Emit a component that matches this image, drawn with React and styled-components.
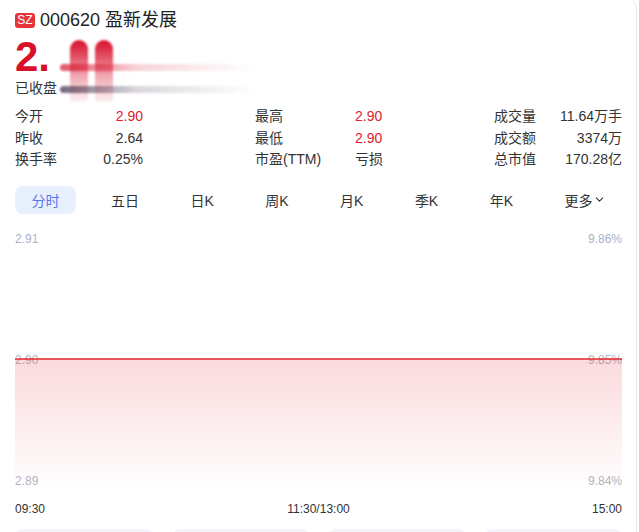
import React from 'react';
import styled, { createGlobalStyle } from 'styled-components';
import { ChevronDown } from 'lucide-react';

const GlobalStyle = createGlobalStyle`
    html, body {
        margin: 0;
        padding: 0;
        background: #fff;
    }
    body {
        font-family: "Liberation Sans", "Noto Sans CJK SC", sans-serif;
        color: #333;
    }
`;

const Card = styled.div`
    width: 637px;
    height: 532px;
    box-sizing: border-box;
    border-right: 1px solid #e4e6ee;
    border-top-right-radius: 8px;
    padding: 10px 14px 0 15px;
    overflow: hidden;
`;

const Header = styled.div`
    display: flex;
    align-items: center;
    gap: 5px;
    height: 20px;
`;

const Badge = styled.span`
    display: inline-flex;
    align-items: center;
    justify-content: center;
    width: 20px;
    height: 15px;
    border-radius: 3px;
    background: #e5353b;
    color: #fff;
    font-size: 12px;
    line-height: 1;
`;

const Name = styled.span`
    font-size: 18px;
    line-height: 20px;
    color: #222;
`;

const Quote = styled.div`
    position: relative;
    margin-top: 6px;
`;

const Price = styled.div`
    font-size: 42px;
    font-weight: bold;
    line-height: 42px;
    color: #d8102b;
`;

const Status = styled.div`
    font-size: 14px;
    line-height: 20px;
    color: #333;
`;

const Streak = styled.div`
    position: absolute;
    pointer-events: none;
    filter: blur(0.8px);
`;

const VStreak = styled(Streak)`
    top: 4px;
    width: 18px;
    height: 62px;
    border-radius: 9px 9px 0 0;
    background: linear-gradient(to bottom, #d8102b 0%, rgba(216, 16, 43, 0.75) 25%, rgba(216, 16, 43, 0.35) 60%, rgba(216, 16, 43, 0.05) 100%);
`;

const HStreak = styled(Streak)`
    left: 45px;
    width: 195px;
    height: 7px;
    border-radius: 4px;
    background: linear-gradient(to right, ${p => p.$from} 0%, ${p => p.$mid} 40%, rgba(255, 255, 255, 0) 100%);
`;

const Stats = styled.div`
    display: flex;
    margin-top: 8px;
    font-size: 14px;
    line-height: 21.5px;
`;

const Group = styled.div`
    display: grid;
    grid-template-columns: ${p => p.$cols};
    width: ${p => p.$width};
    margin-left: ${p => p.$offset || 0};
`;

const Label = styled.span`
    color: #333;
`;

const Value = styled.span`
    text-align: ${p => p.$align || 'right'};
    color: ${p => (p.$red ? '#e0202f' : '#333')};
`;

const Tabs = styled.div`
    display: flex;
    justify-content: space-between;
    margin-top: 15px;
`;

const Tab = styled.div`
    height: 28px;
    padding: 0 16.5px;
    display: flex;
    align-items: center;
    justify-content: center;
    border-radius: 8px;
    font-size: 14px;
    color: ${p => (p.$active ? '#5a76ee' : '#333')};
    background: ${p => (p.$active ? '#e8f0fe' : 'transparent')};
`;

const Chart = styled.div`
    position: relative;
    margin-top: 13px;
    height: 264px;
`;

const AxisLabels = styled.div`
    height: 100%;
    box-sizing: border-box;
    padding: 5px 0 3px;
    display: flex;
    flex-direction: column;
    justify-content: space-between;
`;

const AxisRow = styled.div`
    display: flex;
    justify-content: space-between;
    font-size: 12px;
    line-height: 14px;
    color: ${p => p.$color || '#b3b6c0'};
`;

const Plot = styled.svg`
    position: absolute;
    inset: 0;
    width: 100%;
    height: 100%;
`;

const TimeAxis = styled.div`
    display: flex;
    justify-content: space-between;
    margin-top: 10px;
    font-size: 12px;
    line-height: 16px;
    color: #333;
`;

const Tiles = styled.div`
    display: flex;
    gap: 19px;
    margin-top: 12px;
`;

const Tile = styled.div`
    flex: 1;
    height: 40px;
    border-radius: 8px;
    background: #f3f4f9;
`;

const tabs = ['分时', '五日', '日K', '周K', '月K', '季K', '年K'];

export default function App() {
    return (
        <>
            <GlobalStyle />
            <Card>
                <Header>
                    <Badge>SZ</Badge>
                    <Name>000620 盈新发展</Name>
                </Header>
                <Quote>
                    <Price>2.</Price>
                    <Status>已收盘</Status>
                    <VStreak style={{ left: 55 }} />
                    <VStreak style={{ left: 80 }} />
                    <HStreak style={{ top: 28 }} $from="rgba(216,16,43,0.7)" $mid="rgba(216,16,43,0.18)" />
                    <HStreak style={{ top: 50 }} $from="rgba(60,40,70,0.7)" $mid="rgba(60,40,70,0.18)" />
                </Quote>
                <Stats>
                    <Group $cols="1fr auto" $width="128px">
                        <Label>今开</Label><Value $red>2.90</Value>
                        <Label>昨收</Label><Value>2.64</Value>
                        <Label>换手率</Label><Value>0.25%</Value>
                    </Group>
                    <Group $cols="100px 1fr" $width="200px" $offset="112px">
                        <Label>最高</Label><Value $red $align="left">2.90</Value>
                        <Label>最低</Label><Value $red $align="left">2.90</Value>
                        <Label>市盈(TTM)</Label><Value $align="left">亏损</Value>
                    </Group>
                    <Group $cols="1fr auto" $width="128px" $offset="auto">
                        <Label>成交量</Label><Value>11.64万手</Value>
                        <Label>成交额</Label><Value>3374万</Value>
                        <Label>总市值</Label><Value>170.28亿</Value>
                    </Group>
                </Stats>
                <Tabs>
                    {tabs.map((t, i) => (
                        <Tab key={t} $active={i === 0}>{t}</Tab>
                    ))}
                    <Tab>更多<ChevronDown size={13} strokeWidth={2} /></Tab>
                </Tabs>
                <Chart>
                    <AxisLabels>
                        <AxisRow $color="#aab2c6"><span>2.91</span><span>9.86%</span></AxisRow>
                        <AxisRow><span>2.90</span><span>9.85%</span></AxisRow>
                        <AxisRow><span>2.89</span><span>9.84%</span></AxisRow>
                    </AxisLabels>
                    <Plot viewBox="0 0 607 264" preserveAspectRatio="none">
                        <defs>
                            <linearGradient id="area" x1="0" y1="0" x2="0" y2="1">
                                <stop offset="0%" stopColor="#e8303f" stopOpacity="0.18" />
                                <stop offset="100%" stopColor="#e8303f" stopOpacity="0" />
                            </linearGradient>
                        </defs>
                        <rect x="0" y="132" width="607" height="132" fill="url(#area)" />
                        <line x1="0" y1="132" x2="607" y2="132" stroke="#e8242c" strokeWidth="1.6" />
                    </Plot>
                </Chart>
                <TimeAxis>
                    <span>09:30</span>
                    <span>11:30/13:00</span>
                    <span>15:00</span>
                </TimeAxis>
                <Tiles>
                    <Tile /><Tile /><Tile /><Tile />
                </Tiles>
            </Card>
        </>
    );
}
